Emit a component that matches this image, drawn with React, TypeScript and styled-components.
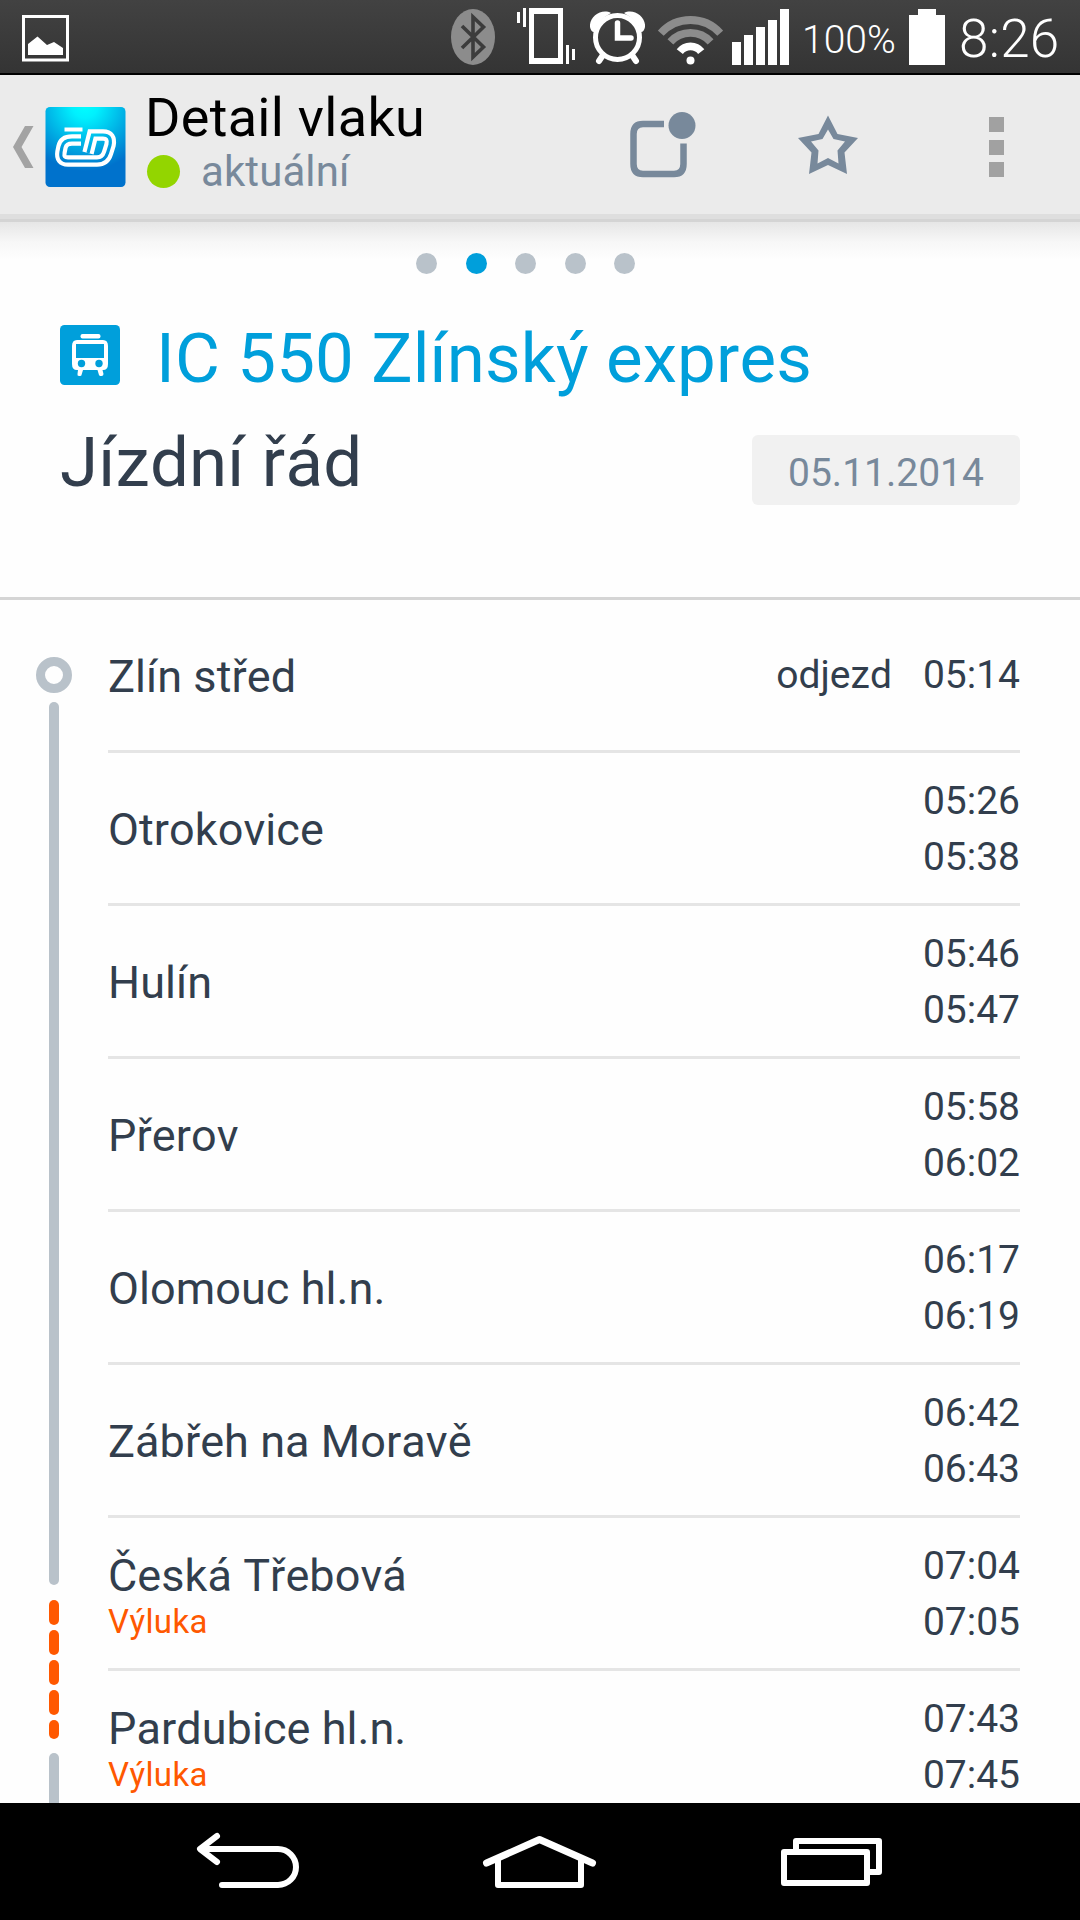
import React from 'react';
import styled, { createGlobalStyle } from 'styled-components';

const slate = '#78899b';
const ink = '#323e4d';
const rail = '#b9c2ca';
const blue = '#009fdb';
const orange = '#ff5800';

const GlobalStyle = createGlobalStyle`
  * { box-sizing: border-box; }
  body { margin: 0; background: #fefefe; }
`;

const Screen = styled.div`
  width: 1080px;
  height: 1920px;
  display: flex;
  flex-direction: column;
  overflow: hidden;
  background: #fefefe;
  color: ${ink};
  font-family: Roboto, 'Liberation Sans', sans-serif;
  font-kerning: none;
  white-space: nowrap;
`;

const StatusBar = styled.div`
  height: 75px;
  flex: none;
  display: flex;
  align-items: flex-start;
  justify-content: space-between;
  padding: 0 22px;
  background: linear-gradient(#424242, #343434);
  border-bottom: 2px solid #000;
  color: #fff;
`;

const StatusIcons = styled.div`
  display: flex;
`;

const Glyph = styled.svg<{ $gap?: number }>`
  display: block;
  flex: none;
  margin-left: ${(p) => p.$gap ?? 0}px;
`;

const StatusText = styled.span<{ $size: number; $width: number; $gap: number; $top: number; $spacing: number }>`
  width: ${(p) => p.$width}px;
  margin-left: ${(p) => p.$gap}px;
  padding-top: ${(p) => p.$top}px;
  font-size: ${(p) => p.$size}px;
  line-height: 60px;
  font-weight: 300;
  letter-spacing: ${(p) => p.$spacing}px;
`;

const ActionBar = styled.header`
  height: 147px;
  flex: none;
  display: flex;
  align-items: flex-start;
  padding: 12px 0 0 13px;
  background: linear-gradient(#ebebeb 0 139px, #dedede 139px 144px, #d4d4d4 144px);
`;

const Titles = styled.div`
  width: 485px;
  margin-left: 19px;
`;

const AppTitle = styled.h1`
  margin: 0;
  font-size: 54px;
  line-height: 61px;
  font-weight: 400;
  color: #000;
  letter-spacing: 0.3px;
`;

const Freshness = styled.div`
  display: flex;
  align-items: center;
  gap: 21px;
  padding-left: 2px;
  font-size: 42px;
  line-height: 48px;
  letter-spacing: 0.1px;
  color: ${slate};
`;

const FreshDot = styled.span`
  width: 33px;
  height: 33px;
  margin-bottom: 1px;
  border-radius: 50%;
  background: #93d500;
`;

const Overflow = styled.div`
  display: flex;
  flex-direction: column;
  gap: 7.5px;
  margin: 30px 0 0 131px;
`;

const OverflowSquare = styled.i`
  width: 15px;
  height: 15px;
  background: #a1a1a1;
`;

const Summary = styled.section`
  height: 378px;
  flex: none;
  padding: 31px 60px 0;
  border-bottom: 3px solid #d5d5d5;
  background: linear-gradient(#e6e6e6, #f7f7f7 20px, #fefefe 38px);
`;

const Pager = styled.div`
  display: flex;
  gap: 28.5px;
  padding-left: 356px;
`;

const PageDot = styled.span<{ $active?: boolean }>`
  width: 21px;
  height: 21px;
  border-radius: 50%;
  background: ${(p) => (p.$active ? blue : rail)};
`;

const TrainTitle = styled.div`
  display: flex;
  align-items: flex-start;
  margin-top: 45px;
`;

const VehicleBadge = styled.div`
  padding-top: 6px;
`;

const TrainName = styled.h2`
  margin: 0 0 0 36px;
  font-size: 69px;
  line-height: 80px;
  font-weight: 400;
  letter-spacing: 0.14px;
  color: ${blue};
`;

const Heading = styled.div`
  display: flex;
  align-items: flex-start;
  justify-content: space-between;
  padding-top: 24px;
`;

const SectionTitle = styled.h3`
  margin: 0;
  font-size: 69px;
  line-height: 80px;
  font-weight: 400;
  letter-spacing: 0.18px;
`;

const DateButton = styled.button`
  width: 268px;
  height: 70px;
  margin-top: 12px;
  padding: 6px 0 0;
  border: 0;
  border-radius: 6px;
  background: #f1f1f1;
  color: ${slate};
  font: 400 39px/64px Roboto, sans-serif;
  text-align: center;
`;

const Timetable = styled.main`
  flex: 1;
  min-height: 0;
  display: flex;
  overflow: hidden;
`;

const Rail = styled.div`
  width: 108px;
  flex: none;
  display: flex;
  flex-direction: column;
  align-items: center;
  padding-top: 57px;
`;

const StartRing = styled.div`
  width: 36px;
  height: 36px;
  flex: none;
  margin-bottom: 9px;
  border: 9px solid ${rail};
  border-radius: 50%;
`;

const Track = styled.div<{ $height: number }>`
  width: 9.5px;
  height: ${(p) => p.$height}px;
  flex: none;
  border-radius: 5px;
  background: ${rail};
`;

const Closure = styled.div`
  display: flex;
  flex-direction: column;
  gap: 5px;
  padding: 15px 0 14px;
`;

const Dash = styled.div<{ $height: number }>`
  width: 9.5px;
  height: ${(p) => p.$height}px;
  border-radius: 5px;
  background: ${orange};
`;

const Stops = styled.div`
  width: 912px;
`;

const Stop = styled.div`
  height: 153px;
  display: flex;
  align-items: center;
  justify-content: space-between;
  border-bottom: 3px solid #e5e5e5;
`;

const Place = styled.div<{ $tall: boolean }>`
  padding-top: ${(p) => (p.$tall ? 5 : 3)}px;
`;

const StopName = styled.div`
  font-size: 45px;
  line-height: 53px;
  letter-spacing: 0.06px;
`;

const Notice = styled.div`
  font-size: 33px;
  line-height: 40px;
  letter-spacing: 0.4px;
  color: ${orange};
`;

const Schedule = styled.div<{ $single: boolean }>`
  display: flex;
  gap: 31px;
  padding-top: ${(p) => (p.$single ? 0 : 2)}px;
  font-size: 39px;
  line-height: 56px;
`;

const Times = styled.div`
  text-align: right;
`;

const NavBar = styled.nav`
  height: 117px;
  flex: none;
  display: flex;
  padding: 33px 0 0 194px;
  background: #000;
`;

const NavGlyph = styled(Glyph)`
  overflow: visible;
`;

type StopData = { name: string; times: string[]; label?: string; notice?: string };

const stops: StopData[] = [
  { name: 'Zlín střed', times: ['05:14'], label: 'odjezd' },
  { name: 'Otrokovice', times: ['05:26', '05:38'] },
  { name: 'Hulín', times: ['05:46', '05:47'] },
  { name: 'Přerov', times: ['05:58', '06:02'] },
  { name: 'Olomouc hl.n.', times: ['06:17', '06:19'] },
  { name: 'Zábřeh na Moravě', times: ['06:42', '06:43'] },
  { name: 'Česká Třebová', times: ['07:04', '07:05'], notice: 'Výluka' },
  { name: 'Pardubice hl.n.', times: ['07:43', '07:45'], notice: 'Výluka' },
];

const PictureIcon = () => (
  <Glyph width="47" height="73" viewBox="22 0 47 73">
    <rect x="23.5" y="16.5" width="44" height="43.5" fill="none" stroke="#fff" strokeWidth="3" />
    <path d="M28 44 37.500 36.500 47 45 54 42 63 48V55H28Z" fill="#fff" />
  </Glyph>
);

const BluetoothIcon = () => (
  <Glyph width="44" height="73" viewBox="451 0 44 73">
    <ellipse cx="473" cy="37" rx="22" ry="28" fill="#8c8c8c" />
    <path d="M462 26 483.500 47 473 57V17L483.500 27 462 48" fill="none" stroke="#3c3c3c" strokeWidth="3.600" />
  </Glyph>
);

const VibrateIcon = () => (
  <Glyph $gap={22} width="58" height="73" viewBox="517 0 58 73">
    <path fill="#fff" d="M517 12h3v11h-3zM523 8h3v19h-3zM566 45h3v19h-3zM572 49h3v11h-3z" />
    <path fill="#fff" fillRule="evenodd" d="M529 8h34v56h-34zM534 14v44h24V14z" />
  </Glyph>
);

const AlarmIcon = () => (
  <Glyph $gap={15} width="55" height="73" viewBox="590 0 55 73">
    <g fill="#fff">
      <path d="M611 13C602 8 589 16 590 27Q591 32 594 32Q598 20 611 13Z" />
      <path d="M624 13C633 8 646 16 645 27Q644 32 641 32Q637 20 624 13Z" />
    </g>
    <g fill="none" stroke="#fff" strokeLinecap="round">
      <circle cx="617.500" cy="37.500" r="22" strokeWidth="5" />
      <path d="M603 55 599 61M632 55 636 61" strokeWidth="6" />
      <path d="M617.500 23V38H631" strokeWidth="5.500" />
    </g>
  </Glyph>
);

const WifiIcon = () => (
  <Glyph $gap={13} width="65" height="73" viewBox="658 0 65 73">
    <g fill="none" strokeWidth="7.800">
      <path d="M660.800 33.200A40 40 0 0 1 720.200 33.200" stroke="#8c8c8c" />
      <path d="M670.400 41.900A27 27 0 0 1 710.600 41.900" stroke="#8c8c8c" />
      <path d="M679.800 51.600A13.500 13.500 0 0 1 701.200 51.600" stroke="#fff" />
    </g>
    <circle cx="690.500" cy="60.500" r="4" fill="#fff" />
  </Glyph>
);

const SignalIcon = () => (
  <Glyph $gap={9} width="57" height="73" viewBox="732 0 57 73">
    <path fill="#fff" d="M732 42h9v23h-9zM744 35h9v30h-9zM756 27h9v38h-9zM768 20h9v45h-9zM780 9h9v56h-9z" />
  </Glyph>
);

const BatteryIcon = () => (
  <Glyph width="36" height="73" viewBox="909 0 36 73">
    <path fill="#fff" d="M918 9h18v6h9v50h-36V15h9z" />
  </Glyph>
);

const BackChevron = () => (
  <Glyph width="21" height="120" viewBox="13 87 21 120">
    <path d="M25 126H33.500L21.500 147 33.500 168H25L13 147Z" fill="#a3a3a3" />
  </Glyph>
);

const markPath =
  'M81 140H72Q63.500 140 62 147L61 152Q59.500 161 68 161H97Q105 161 107.500 153L110 145Q112 135 103 135H92.500L88 153';

const CarrierLogo = () => (
  <Glyph $gap={11} width="81" height="120" viewBox="45 87 81 120">
    <defs>
      <radialGradient id="sky" gradientUnits="userSpaceOnUse" cx="85" cy="105" r="66">
        <stop offset="0" stopColor="#00ffff" />
        <stop offset="0.200" stopColor="#00f0fe" />
        <stop offset="1" stopColor="#0072cc" />
      </radialGradient>
    </defs>
    <rect x="45.500" y="107" width="80" height="80" rx="4.500" fill="url(#sky)" />
    <path d={markPath} fill="none" stroke="#fff" strokeWidth="11.500" />
    <path d={markPath} fill="none" stroke="url(#sky)" strokeWidth="3.200" />
    <path d="M64.500 129.500H82.500" stroke="#fff" strokeWidth="4" />
  </Glyph>
);

const WidgetIcon = () => (
  <Glyph width="66" height="120" viewBox="630 87 66 120">
    <path
      d="M664 124H643Q633.500 124 633.500 134V164Q633.500 174 643 174H674Q683.500 174 683.500 164V143.500"
      fill="none"
      stroke={slate}
      strokeWidth="6.500"
    />
    <circle cx="682" cy="125.500" r="13.500" fill={slate} />
  </Glyph>
);

const StarIcon = () => (
  <Glyph $gap={102} width="60" height="120" viewBox="798 87 60 120">
    <path
      fill={slate}
      fillRule="evenodd"
      d="M828 115.500 837.500 134 858 138 844.500 152.500 847 174 828 165 809 174 811.500 152.500 798 138 818.500 134ZM828 129.500 822.500 139 811 141.500 818.500 150.500 817.500 163.500 828 158 838.500 163.500 837.500 150.500 845 141.500 833.500 139Z"
    />
  </Glyph>
);

const TramIcon = () => (
  <Glyph width="60" height="60" viewBox="0 0 60 60">
    <rect width="60" height="60" rx="4.500" fill={blue} />
    <rect x="20.500" y="9" width="20" height="4.500" rx="2" fill="#fff" />
    <path
      fill="#fff"
      fillRule="evenodd"
      d="M17 15H43Q48 15 48 21V39Q48 45 43 45H42.500L43.500 49Q43.500 51 41.500 51H40.500Q39.500 51 39 50L37.500 45H23L21.500 50Q21.500 51 20 51H19Q17 51 17.500 49L18 45H17Q12 45 12 39V21Q12 15 17 15ZM16 19V33H44V19Z"
    />
    <circle cx="21.500" cy="38.500" r="3.700" fill={blue} />
    <circle cx="39" cy="38.500" r="3.700" fill={blue} />
  </Glyph>
);

const App = () => (
  <Screen>
    <GlobalStyle />
    <StatusBar>
      <PictureIcon />
      <StatusIcons>
        <BluetoothIcon />
        <VibrateIcon />
        <AlarmIcon />
        <WifiIcon />
        <SignalIcon />
        <StatusText $size={39} $width={107} $gap={13} $top={10} $spacing={0}>100%</StatusText>
        <BatteryIcon />
        <StatusText $size={53} $width={99} $gap={14} $top={9} $spacing={0.3}>8:26</StatusText>
      </StatusIcons>
    </StatusBar>

    <ActionBar>
      <BackChevron />
      <CarrierLogo />
      <Titles>
        <AppTitle>Detail vlaku</AppTitle>
        <Freshness>
          <FreshDot />
          aktuální
        </Freshness>
      </Titles>
      <WidgetIcon />
      <StarIcon />
      <Overflow>
        <OverflowSquare />
        <OverflowSquare />
        <OverflowSquare />
      </Overflow>
    </ActionBar>

    <Summary>
      <Pager>
        {[0, 1, 2, 3, 4].map((page) => (
          <PageDot key={page} $active={page === 1} />
        ))}
      </Pager>
      <TrainTitle>
        <VehicleBadge>
          <TramIcon />
        </VehicleBadge>
        <TrainName>IC 550 Zlínský expres</TrainName>
      </TrainTitle>
      <Heading>
        <SectionTitle>Jízdní řád</SectionTitle>
        <DateButton>05.11.2014</DateButton>
      </Heading>
    </Summary>

    <Timetable>
      <Rail>
        <StartRing />
        <Track $height={883} />
        <Closure>
          {[25, 25, 25, 25, 19].map((height, i) => (
            <Dash key={i} $height={height} />
          ))}
        </Closure>
        <Track $height={80} />
      </Rail>
      <Stops>
        {stops.map((stop) => (
          <Stop key={stop.name}>
            <Place $tall={Boolean(stop.notice)}>
              <StopName>{stop.name}</StopName>
              {stop.notice && <Notice>{stop.notice}</Notice>}
            </Place>
            <Schedule $single={stop.times.length === 1}>
              {stop.label && <span>{stop.label}</span>}
              <Times>
                {stop.times.map((time) => (
                  <div key={time}>{time}</div>
                ))}
              </Times>
            </Schedule>
          </Stop>
        ))}
      </Stops>
    </Timetable>

    <NavBar>
      <NavGlyph width="107" height="52" viewBox="194 1836 107 52">
        <path
          d="M217 1836 200 1849 217 1862M201 1849H278A18 18 0 0 1 278 1885H222"
          fill="none"
          stroke="#fff"
          strokeWidth="6"
          strokeLinecap="round"
          strokeLinejoin="round"
        />
      </NavGlyph>
      <NavGlyph $gap={181} width="115" height="52" viewBox="482 1836 115 52">
        <g fill="none" stroke="#fff" strokeLinecap="round" strokeLinejoin="round">
          <path d="M486.500 1863 539.500 1839.500 592.500 1863" strokeWidth="7" />
          <path d="M498 1860V1885H581V1860" strokeWidth="6" />
        </g>
      </NavGlyph>
      <NavGlyph $gap={184} width="101" height="52" viewBox="781 1836 101 52">
        <g fill="none" stroke="#fff" strokeWidth="6" strokeLinejoin="round">
          <path d="M796 1852V1841H879V1872H867" />
          <rect x="784" y="1852" width="83" height="31" />
        </g>
      </NavGlyph>
    </NavBar>
  </Screen>
);

export default App;
